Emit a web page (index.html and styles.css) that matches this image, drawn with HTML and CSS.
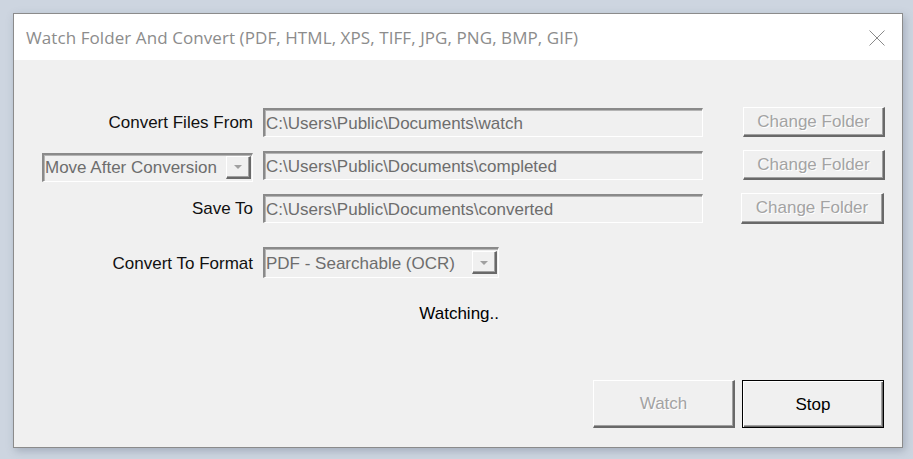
FILE: index.html
```html
<!DOCTYPE html>
<html>
<head>
<meta charset="utf-8">
<link rel="stylesheet" href="styles.css">
</head>
<body>
<div class="window">
  <div class="titlebar">
    <span class="title">Watch Folder And Convert (PDF, HTML, XPS, TIFF, JPG, PNG, BMP, GIF)</span>
    <svg class="close" width="16" height="16" viewBox="0 0 16 16"><path d="M0.5 0.5 L15.5 15.5 M15.5 0.5 L0.5 15.5" stroke="#8a8a8a" stroke-width="1" fill="none"/></svg>
  </div>
  <div class="content">
    <div class="grid">
      <div class="label">Convert Files From</div>
      <div class="textbox">C:\Users\Public\Documents\watch</div>
      <div class="btn disabled">Change Folder</div>

      <div class="combo combo-move"><span class="combo-text">Move After Conversion</span><span class="drop"><span class="arrow"></span></span></div>
      <div class="textbox">C:\Users\Public\Documents\completed</div>
      <div class="btn disabled">Change Folder</div>

      <div class="label">Save To</div>
      <div class="textbox">C:\Users\Public\Documents\converted</div>
      <div class="btn disabled shift">Change Folder</div>
    </div>
    <div class="format-row">
      <div class="label">Convert To Format</div>
      <div class="combo combo-format"><span class="combo-text">PDF - Searchable (OCR)</span><span class="drop"><span class="arrow"></span></span></div>
    </div>
    <div class="status-row">
      <div class="status">Watching..</div>
    </div>
    <div class="actions">
      <div class="btn big disabled">Watch</div>
      <div class="btn big default">Stop</div>
    </div>
  </div>
</div>
</body>
</html>
```
FILE: styles.css
```css
html, body {
  margin: 0;
  padding: 0;
}
body {
  background: #cdd5e0;
  width: 913px;
  height: 459px;
  padding: 13px 0 0 13px;
  box-sizing: border-box;
  font-family: "Liberation Sans", Arial, sans-serif;
}
.window {
  width: 890px;
  height: 435px;
  box-sizing: border-box;
  border: 1px solid #8b8b8b;
  background: #f0f0f0;
  display: flex;
  flex-direction: column;
  box-shadow: 2px 3px 8px rgba(90, 100, 120, 0.35);
}
.titlebar {
  height: 46px;
  background: #ffffff;
  display: flex;
  align-items: center;
  justify-content: space-between;
  padding: 0 17px 0 12px;
  flex: none;
}
.title {
  font-family: "Open Sans", "Noto Sans", sans-serif;
  font-size: 17px;
  color: #8c8c8c;
  letter-spacing: 0.08px;
}
.close {
  display: block;
  position: relative;
  top: 1px;
}
.content {
  flex: 1;
  display: flex;
  flex-direction: column;
  padding: 47px 16px 19px 28px;
  font-size: 17px;
  color: #000;
}
.grid {
  display: grid;
  grid-template-columns: 211px 440px 172px;
  column-gap: 10px;
  grid-auto-rows: 30px;
  row-gap: 13px;
  align-items: center;
}
.grid .btn {
  margin-left: 30px;
  width: 142px;
  height: 30px;
}
.grid .btn.shift {
  margin-left: 28px;
  width: 143px;
  height: 31px;
}
.label {
  text-align: right;
  color: #111;
  white-space: nowrap;
  padding-top: 2px;
}
.textbox {
  height: 29px;
  box-sizing: border-box;
  border-style: solid;
  border-width: 2px 1px 1px 2px;
  border-color: #8a8a8a #ffffff #ffffff #8a8a8a;
  box-shadow: inset 1px 1px 0 #b4b4b4;
  background: #f0f0f0;
  color: #6d6d6d;
  padding: 2px 0 0 1px;
  display: flex;
  align-items: center;
  white-space: nowrap;
  overflow: hidden;
}
.btn {
  box-sizing: border-box;
  display: flex;
  align-items: center;
  justify-content: center;
  background: #f0f0f0;
  border-style: solid;
  border-width: 1px 2px 2px 1px;
  border-color: #ffffff #696969 #696969 #ffffff;
  box-shadow: inset -1px -1px 0 #a0a0a0;
  white-space: nowrap;
  padding-top: 1px;
}
.btn.disabled {
  color: #a3a3a3;
  text-shadow: 1px 1px 0 #ffffff;
}
.combo {
  box-sizing: border-box;
  border-style: solid;
  border-width: 2px 1px 1px 2px;
  border-color: #8a8a8a #ffffff #ffffff #8a8a8a;
  box-shadow: inset 1px 1px 0 #b4b4b4;
  background: #f0f0f0;
  color: #6d6d6d;
  display: flex;
  align-items: center;
  justify-content: space-between;
  padding: 0 1px 1px 1px;
  white-space: nowrap;
}
.combo-text {
  position: relative;
  top: 1px;
}
.combo-move {
  height: 29px;
  margin-top: 4px;
}
.combo-format {
  width: 236px;
  height: 31px;
}
.drop {
  width: 25px;
  height: 23px;
  box-sizing: border-box;
  border-style: solid;
  border-width: 1px 2px 2px 1px;
  border-color: #ffffff #696969 #696969 #ffffff;
  box-shadow: inset -1px -1px 0 #a0a0a0;
  display: flex;
  align-items: center;
  justify-content: center;
}
.arrow {
  width: 0;
  height: 0;
  border-left: 4px solid transparent;
  border-right: 4px solid transparent;
  border-top: 4px solid #a0a0a0;
  margin-top: 1px;
}
.format-row {
  display: flex;
  align-items: center;
  gap: 10px;
  margin-top: 24px;
}
.format-row .label {
  width: 211px;
}
.status-row {
  display: flex;
  padding-left: 221px;
  margin-top: 26px;
}
.status {
  width: 236px;
  text-align: right;
  color: #000;
}
.actions {
  margin-top: auto;
  display: flex;
  justify-content: flex-end;
  gap: 7px;
  padding-right: 2px;
}
.btn.big {
  width: 142px;
  height: 48px;
}
.btn.default {
  border: 1px solid #000;
  box-shadow: inset 1px 1px 0 #ffffff, inset -1px -1px 0 #696969, inset -2px -2px 0 #a0a0a0;
  color: #000;
}
```
